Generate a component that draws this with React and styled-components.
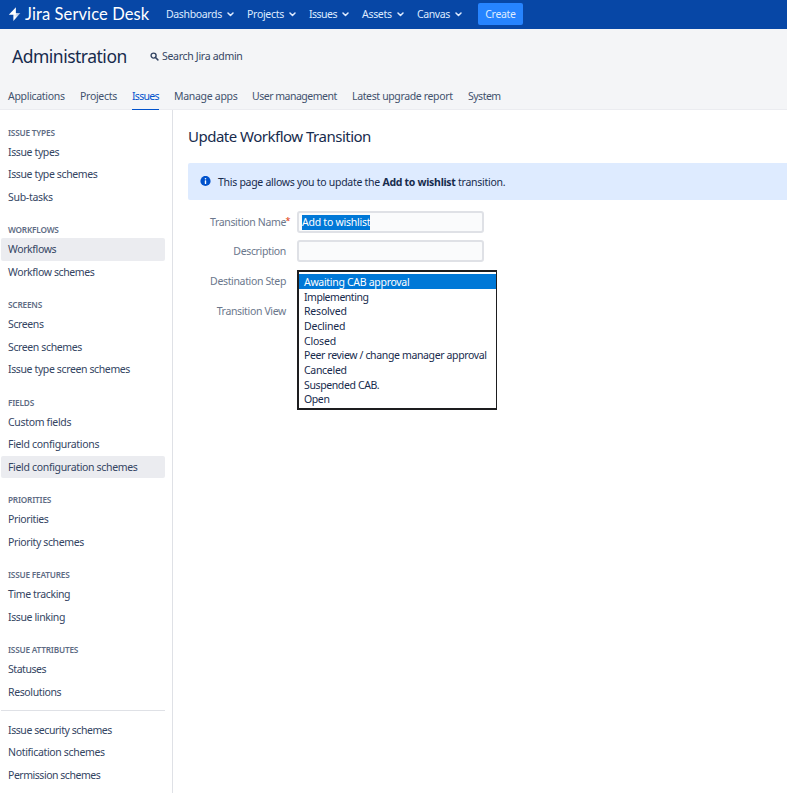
import styled, { createGlobalStyle } from 'styled-components';

const GlobalStyle = createGlobalStyle`
    * {
        box-sizing: border-box;
    }

    body {
        margin: 0;
        background: #fff;
        color: #172b4d;
        font-family: 'Noto Sans', 'Open Sans', sans-serif;
        font-size: 10.5px;
        letter-spacing: -0.3px;
        overflow: hidden;
    }
`;

const Page = styled.div`
    display: flex;
    flex-direction: column;
    width: 100%;
    height: 793px;
    overflow: hidden;
`;

const TopBar = styled.header`
    display: flex;
    align-items: center;
    flex: none;
    height: 29px;
    padding-left: 8px;
    background: #0747a6;
    color: #deebff;
`;

const Logo = styled.div`
    display: flex;
    align-items: center;
    gap: 4px;
    width: 158px;
    color: #fff;
`;

const LogoText = styled.span`
    margin-top: -1px;
    font-family: Lato, sans-serif;
    font-size: 16.5px;
    line-height: 20px;
    letter-spacing: 0.1px;
    white-space: nowrap;
`;

const MenuItem = styled.div`
    display: flex;
    align-items: center;
    gap: 5px;
    width: ${({ $width }) => $width}px;
    line-height: 15px;
    letter-spacing: ${({ $tracking }) => $tracking || -0.3}px;
    white-space: nowrap;
`;

const CreateButton = styled.button`
    width: 45px;
    height: 22px;
    margin-bottom: 1px;
    padding: 0;
    border: 0;
    border-radius: 2px;
    background: #2684ff;
    color: #deebff;
    font: inherit;
    letter-spacing: inherit;
`;

const AdminHeader = styled.div`
    flex: none;
    height: 81px;
    border-bottom: 1px solid #ebecf0;
    background: #f4f5f7;
`;

const AdminTitleRow = styled.div`
    display: flex;
    align-items: center;
    height: 54px;
    padding-left: 12px;
`;

const AdminTitle = styled.h1`
    width: 138px;
    margin: 0;
    font-size: 17.5px;
    font-weight: 400;
    line-height: 24px;
    letter-spacing: -0.5px;
`;

const AdminSearch = styled.div`
    display: flex;
    align-items: center;
    gap: 3px;
    color: #344563;
    white-space: nowrap;
`;

const Tabs = styled.nav`
    display: flex;
    height: 27px;
    padding-left: 8px;
`;

const TabSlot = styled.div`
    width: ${({ $width }) => $width}px;
`;

const Tab = styled.a`
    display: inline-block;
    height: 27px;
    padding-top: 6px;
    border-bottom: 1px solid ${({ $active }) => ($active ? '#0052cc' : 'transparent')};
    color: ${({ $active }) => ($active ? '#0052cc' : '#42526e')};
    line-height: 15px;
    letter-spacing: ${({ $tracking }) => $tracking || -0.3}px;
    white-space: nowrap;
`;

const Body = styled.div`
    display: flex;
    flex: 1;
    min-height: 0;
`;

const Sidebar = styled.aside`
    flex: none;
    width: 173px;
    padding: 0.5px 7px 0 1px;
    border-right: 1px solid #dfe1e6;
`;

const GroupTitle = styled.h2`
    height: 30px;
    margin: 0;
    padding: 14px 0 0 7px;
    color: #5e6c84;
    font-size: 8.25px;
    font-weight: 600;
    line-height: 15px;
    letter-spacing: -0.2px;
    text-transform: uppercase;
`;

const SideLink = styled.a`
    display: block;
    height: 22.5px;
    padding-left: 7px;
    border-radius: 2px;
    background: ${({ $active }) => ($active ? '#ebecf0' : 'transparent')};
    color: #344563;
    line-height: 22px;
    letter-spacing: ${({ $tracking }) => $tracking || -0.38}px;
    white-space: nowrap;
`;

const Divider = styled.hr`
    height: 1px;
    margin: 7px 0 7.5px;
    border: 0;
    background: #dfe1e6;
`;

const Main = styled.main`
    flex: 1;
    min-width: 0;
    padding: 14px 0 0 15px;
`;

const PageTitle = styled.h2`
    margin: 0;
    font-size: 15px;
    font-weight: 400;
    line-height: 24px;
    letter-spacing: -0.5px;
`;

const Message = styled.div`
    display: flex;
    align-items: center;
    gap: 7px;
    height: 37px;
    margin-top: 15px;
    padding-left: 12px;
    border-radius: 2px 0 0 2px;
    background: #deebff;
    white-space: nowrap;
`;

const MessageText = styled.span`
    letter-spacing: -0.28px;
`;

const Form = styled.form`
    display: flex;
    flex-direction: column;
    gap: 7.5px;
    padding-top: 11px;
`;

const Field = styled.div`
    display: flex;
    align-items: center;
    gap: 11px;
    height: 22px;
    margin-top: ${({ $shift }) => $shift || 0}px;
    margin-bottom: ${({ $shift }) => -($shift || 0)}px;
`;

const Label = styled.label`
    position: relative;
    width: 98px;
    color: #6b778c;
    letter-spacing: -0.35px;
    text-align: right;
    white-space: nowrap;
`;

const Required = styled.span`
    position: absolute;
    left: 100%;
    top: -1px;
    margin-left: -0.5px;
    color: #de350b;
    font-size: 9px;
`;

const TextBox = styled.div`
    display: flex;
    align-items: center;
    width: 187px;
    height: 22px;
    padding-left: 3px;
    border: 2px solid #dfe1e6;
    border-radius: 3px;
    background: #fafbfc;
`;

const Selection = styled.span`
    height: 15px;
    background: #0078d7;
    color: #fff;
    letter-spacing: -0.25px;
    line-height: 15px;
    white-space: nowrap;
`;

const SelectAnchor = styled.div`
    position: relative;
    width: 200px;
    height: 22px;
`;

const OptionList = styled.ul`
    position: absolute;
    top: 0;
    left: 0;
    width: 200px;
    height: 140px;
    margin: 0;
    padding: 2px 0 0;
    border: 2px solid #1d1d1f;
    border-right-width: 1px;
    background: #fff;
    list-style: none;
`;

const Option = styled.li`
    height: 14.67px;
    padding-left: 5px;
    background: ${({ $selected }) => ($selected ? '#0078d7' : 'transparent')};
    color: ${({ $selected }) => ($selected ? '#fff' : '#172b4d')};
    line-height: 16px;
    letter-spacing: ${({ $tracking }) => $tracking || -0.2}px;
    white-space: nowrap;
`;

const menus = [
    { label: 'Dashboards', width: 81, tracking: -0.35 },
    { label: 'Projects', width: 62 },
    { label: 'Issues', width: 53, tracking: -0.5 },
    { label: 'Assets', width: 55 },
    { label: 'Canvas', width: 61, tracking: -0.4 },
];

const tabs = [
    { label: 'Applications', width: 72 },
    { label: 'Projects', width: 52 },
    { label: 'Issues', width: 42, active: true, tracking: -0.7 },
    { label: 'Manage apps', width: 78 },
    { label: 'User management', width: 100, tracking: -0.5 },
    { label: 'Latest upgrade report', width: 116, tracking: -0.36 },
    { label: 'System', width: 40, tracking: -0.5 },
];

const groups = [
    {
        title: 'Issue types',
        links: [{ label: 'Issue types' }, { label: 'Issue type schemes' }, { label: 'Sub-tasks', tracking: -0.3 }],
    },
    {
        title: 'Workflows',
        links: [{ label: 'Workflows', active: true }, { label: 'Workflow schemes' }],
    },
    {
        title: 'Screens',
        links: [{ label: 'Screens' }, { label: 'Screen schemes' }, { label: 'Issue type screen schemes' }],
    },
    {
        title: 'Fields',
        links: [
            { label: 'Custom fields', tracking: -0.32 },
            { label: 'Field configurations', tracking: -0.32 },
            { label: 'Field configuration schemes', active: true, tracking: -0.33 },
        ],
    },
    {
        title: 'Priorities',
        links: [{ label: 'Priorities' }, { label: 'Priority schemes' }],
    },
    {
        title: 'Issue features',
        links: [{ label: 'Time tracking' }, { label: 'Issue linking' }],
    },
    {
        title: 'Issue attributes',
        links: [{ label: 'Statuses', tracking: -0.45 }, { label: 'Resolutions' }],
    },
];

const schemeLinks = [
    { label: 'Issue security schemes', tracking: -0.43 },
    { label: 'Notification schemes', tracking: -0.33 },
    { label: 'Permission schemes', tracking: -0.47 },
];

const steps = [
    { label: 'Awaiting CAB approval', tracking: -0.3 },
    { label: 'Implementing', tracking: -0.48 },
    { label: 'Resolved' },
    { label: 'Declined' },
    { label: 'Closed' },
    { label: 'Peer review / change manager approval', tracking: -0.36 },
    { label: 'Canceled', tracking: -0.3 },
    { label: 'Suspended CAB.', tracking: -0.38 },
    { label: 'Open', tracking: -0.4 },
];

const BoltIcon = () => (
    <svg width="13" height="15" viewBox="0 0 13 15">
        <defs>
            <linearGradient id="bolt" x1="0" y1="1" x2="1" y2="0">
                <stop offset="0.3" stopColor="#fff" />
                <stop offset="1" stopColor="#8fabd8" />
            </linearGradient>
        </defs>
        <path d="M5.4 6 H12.4 L5.4 14 Z" fill="url(#bolt)" />
        <path d="M7.9 0.3 V7.8 H0.8 Z" fill="#fff" />
    </svg>
);

const Chevron = () => (
    <svg width="7" height="5" viewBox="0 0 7 5">
        <path d="M1 1 L3.5 3.5 L6 1" fill="none" stroke="#deebff" strokeWidth="1.5" strokeLinecap="round" strokeLinejoin="round" />
    </svg>
);

const SearchIcon = () => (
    <svg width="9" height="9" viewBox="0 0 9 9">
        <circle cx="3.6" cy="3.6" r="2.5" fill="none" stroke="#344563" strokeWidth="1.4" />
        <path d="M5.5 5.5 L7.9 7.9" stroke="#344563" strokeWidth="1.5" strokeLinecap="round" />
    </svg>
);

const InfoIcon = () => (
    <svg width="11" height="11" viewBox="0 0 11 11">
        <circle cx="5.5" cy="5" r="5.1" fill="#0052cc" />
        <circle cx="5.5" cy="2.8" r="0.8" fill="#fff" />
        <rect x="4.8" y="4.3" width="1.4" height="3.6" rx="0.5" fill="#fff" />
    </svg>
);

const SideLinks = ({ links }) =>
    links.map(link => (
        <SideLink key={link.label} $active={link.active} $tracking={link.tracking}>
            {link.label}
        </SideLink>
    ));

export default function App() {
    return (
        <Page>
            <GlobalStyle />
            <TopBar>
                <Logo>
                    <BoltIcon />
                    <LogoText>Jira Service Desk</LogoText>
                </Logo>
                {menus.map(menu => (
                    <MenuItem key={menu.label} $width={menu.width} $tracking={menu.tracking}>
                        {menu.label}
                        <Chevron />
                    </MenuItem>
                ))}
                <CreateButton>Create</CreateButton>
            </TopBar>
            <AdminHeader>
                <AdminTitleRow>
                    <AdminTitle>Administration</AdminTitle>
                    <AdminSearch>
                        <SearchIcon />
                        Search Jira admin
                    </AdminSearch>
                </AdminTitleRow>
                <Tabs>
                    {tabs.map(tab => (
                        <TabSlot key={tab.label} $width={tab.width}>
                            <Tab $active={tab.active} $tracking={tab.tracking}>
                                {tab.label}
                            </Tab>
                        </TabSlot>
                    ))}
                </Tabs>
            </AdminHeader>
            <Body>
                <Sidebar>
                    {groups.map(group => (
                        <section key={group.title}>
                            <GroupTitle>{group.title}</GroupTitle>
                            <SideLinks links={group.links} />
                        </section>
                    ))}
                    <Divider />
                    <SideLinks links={schemeLinks} />
                </Sidebar>
                <Main>
                    <PageTitle>Update Workflow Transition</PageTitle>
                    <Message>
                        <InfoIcon />
                        <MessageText>
                            This page allows you to update the <b>Add to wishlist</b> transition.
                        </MessageText>
                    </Message>
                    <Form>
                        <Field>
                            <Label>
                                Transition Name<Required>*</Required>
                            </Label>
                            <TextBox>
                                <Selection>Add to wishlist</Selection>
                            </TextBox>
                        </Field>
                        <Field $shift={-0.5}>
                            <Label>Description</Label>
                            <TextBox />
                        </Field>
                        <Field>
                            <Label>Destination Step</Label>
                            <SelectAnchor>
                                <OptionList>
                                    {steps.map((step, i) => (
                                        <Option key={step.label} $selected={i === 0} $tracking={step.tracking}>
                                            {step.label}
                                        </Option>
                                    ))}
                                </OptionList>
                            </SelectAnchor>
                        </Field>
                        <Field>
                            <Label>Transition View</Label>
                        </Field>
                    </Form>
                </Main>
            </Body>
        </Page>
    );
}
